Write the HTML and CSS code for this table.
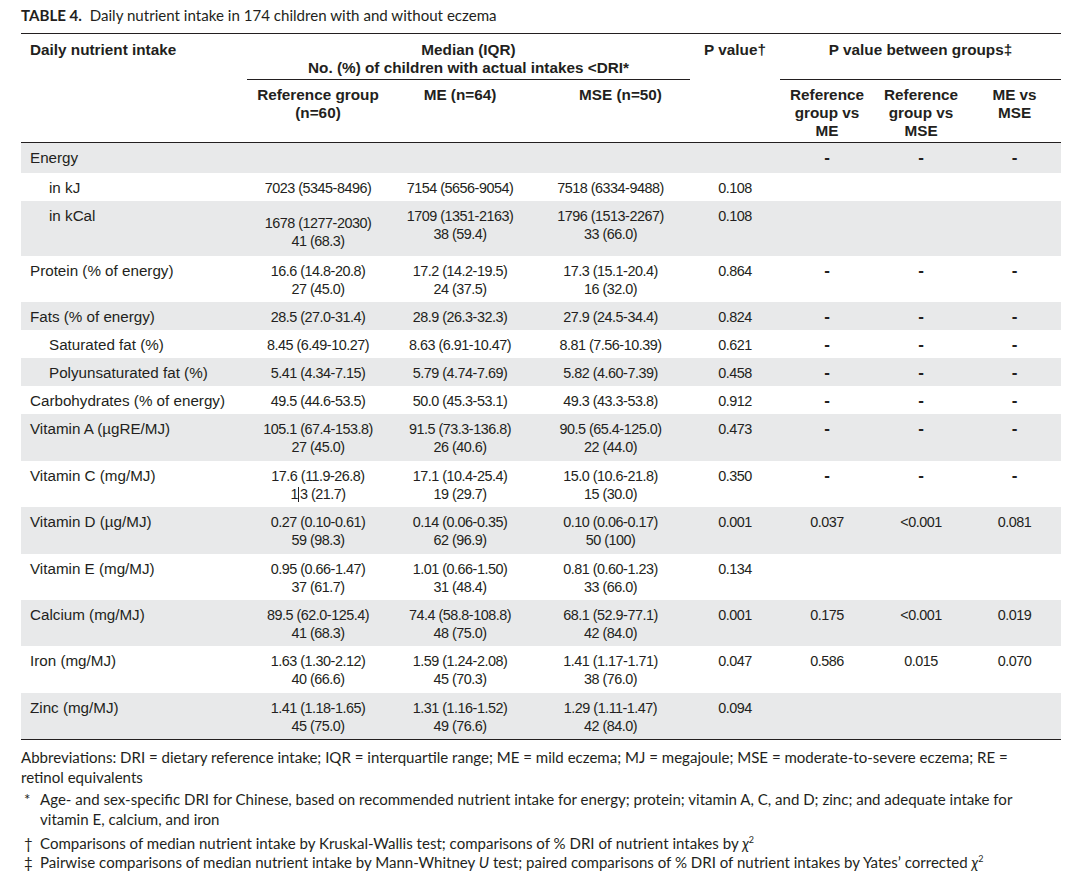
FILE: index.html
```html
<!DOCTYPE html>
<html lang="en">
<head>
<meta charset="utf-8">
<title>Table 4</title>
<link rel="stylesheet" href="styles.css">
</head>
<body>
<div class="page">
  <h1 class="title"><span class="tno">TABLE 4.</span>&nbsp; Daily nutrient intake in 174 children with and without eczema</h1>
  <table class="nt">
    <colgroup>
      <col class="c-lab"><col class="c-num"><col class="c-num"><col class="c-num3"><col class="c-p"><col class="c-g"><col class="c-g"><col class="c-g3">
    </colgroup>
    <thead>
      <tr class="h1">
        <th rowspan="2" class="lab">Daily nutrient intake</th>
        <th colspan="3" class="span">Median (IQR)<br>No. (%) of children with actual intakes &lt;DRI*</th>
        <th rowspan="2" class="pv">P value†</th>
        <th colspan="3" class="span">P value between groups‡</th>
      </tr>
      <tr class="h2">
        <th>Reference group<br>(n=60)</th>
        <th>ME (n=64)</th>
        <th class="mse">MSE (n=50)</th>
        <th>Reference<br>group vs<br>ME</th>
        <th>Reference<br>group vs<br>MSE</th>
        <th>ME vs<br>MSE</th>
      </tr>
    </thead>
    <tbody>
      <tr class="g e">
        <td class="lab">Energy</td><td></td><td></td><td></td><td></td><td class="ds">-</td><td class="ds">-</td><td class="ds">-</td>
      </tr>
      <tr>
        <td class="lab sub">in kJ</td><td>7023 (5345-8496)</td><td>7154 (5656-9054)</td><td>7518 (6334-9488)</td><td>0.108</td><td></td><td></td><td></td>
      </tr>
      <tr class="g kcal">
        <td class="lab sub">in kCal</td><td class="low">1678 (1277-2030)<br>41 (68.3)</td><td>1709 (1351-2163)<br>38 (59.4)</td><td>1796 (1513-2267)<br>33 (66.0)</td><td>0.108</td><td></td><td></td><td></td>
      </tr>
      <tr class="d">
        <td class="lab">Protein (% of energy)</td><td>16.6 (14.8-20.8)<br>27 (45.0)</td><td>17.2 (14.2-19.5)<br>24 (37.5)</td><td>17.3 (15.1-20.4)<br>16 (32.0)</td><td>0.864</td><td class="ds">-</td><td class="ds">-</td><td class="ds">-</td>
      </tr>
      <tr class="g">
        <td class="lab">Fats (% of energy)</td><td>28.5 (27.0-31.4)</td><td>28.9 (26.3-32.3)</td><td>27.9 (24.5-34.4)</td><td>0.824</td><td class="ds">-</td><td class="ds">-</td><td class="ds">-</td>
      </tr>
      <tr>
        <td class="lab sub">Saturated fat (%)</td><td>8.45 (6.49-10.27)</td><td>8.63 (6.91-10.47)</td><td>8.81 (7.56-10.39)</td><td>0.621</td><td class="ds">-</td><td class="ds">-</td><td class="ds">-</td>
      </tr>
      <tr class="g">
        <td class="lab sub">Polyunsaturated fat (%)</td><td>5.41 (4.34-7.15)</td><td>5.79 (4.74-7.69)</td><td>5.82 (4.60-7.39)</td><td>0.458</td><td class="ds">-</td><td class="ds">-</td><td class="ds">-</td>
      </tr>
      <tr>
        <td class="lab">Carbohydrates (% of energy)</td><td>49.5 (44.6-53.5)</td><td>50.0 (45.3-53.1)</td><td>49.3 (43.3-53.8)</td><td>0.912</td><td class="ds">-</td><td class="ds">-</td><td class="ds">-</td>
      </tr>
      <tr class="g d">
        <td class="lab">Vitamin A (µgRE/MJ)</td><td>105.1 (67.4-153.8)<br>27 (45.0)</td><td>91.5 (73.3-136.8)<br>26 (40.6)</td><td>90.5 (65.4-125.0)<br>22 (44.0)</td><td>0.473</td><td class="ds">-</td><td class="ds">-</td><td class="ds">-</td>
      </tr>
      <tr class="d">
        <td class="lab">Vitamin C (mg/MJ)</td><td>17.6 (11.9-26.8)<br>1<span class="caret"></span>3 (21.7)</td><td>17.1 (10.4-25.4)<br>19 (29.7)</td><td>15.0 (10.6-21.8)<br>15 (30.0)</td><td>0.350</td><td class="ds">-</td><td class="ds">-</td><td class="ds">-</td>
      </tr>
      <tr class="g d">
        <td class="lab">Vitamin D (µg/MJ)</td><td>0.27 (0.10-0.61)<br>59 (98.3)</td><td>0.14 (0.06-0.35)<br>62 (96.9)</td><td>0.10 (0.06-0.17)<br>50 (100)</td><td>0.001</td><td>0.037</td><td>&lt;0.001</td><td>0.081</td>
      </tr>
      <tr class="d">
        <td class="lab">Vitamin E (mg/MJ)</td><td>0.95 (0.66-1.47)<br>37 (61.7)</td><td>1.01 (0.66-1.50)<br>31 (48.4)</td><td>0.81 (0.60-1.23)<br>33 (66.0)</td><td>0.134</td><td></td><td></td><td></td>
      </tr>
      <tr class="g d">
        <td class="lab">Calcium (mg/MJ)</td><td>89.5 (62.0-125.4)<br>41 (68.3)</td><td>74.4 (58.8-108.8)<br>48 (75.0)</td><td>68.1 (52.9-77.1)<br>42 (84.0)</td><td>0.001</td><td>0.175</td><td>&lt;0.001</td><td>0.019</td>
      </tr>
      <tr class="d">
        <td class="lab">Iron (mg/MJ)</td><td>1.63 (1.30-2.12)<br>40 (66.6)</td><td>1.59 (1.24-2.08)<br>45 (70.3)</td><td>1.41 (1.17-1.71)<br>38 (76.0)</td><td>0.047</td><td>0.586</td><td>0.015</td><td>0.070</td>
      </tr>
      <tr class="g d">
        <td class="lab">Zinc (mg/MJ)</td><td>1.41 (1.18-1.65)<br>45 (75.0)</td><td>1.31 (1.16-1.52)<br>49 (76.6)</td><td>1.29 (1.11-1.47)<br>42 (84.0)</td><td>0.094</td><td></td><td></td><td></td>
      </tr>
    </tbody>
  </table>
  <div class="notes">
    <p class="abbr">Abbreviations: DRI = dietary reference intake; IQR = interquartile range; ME = mild eczema; MJ = megajoule; MSE = moderate-to-severe eczema; RE =<br>retinol equivalents</p>
    <p class="fn star"><span class="mk">*</span><span class="tx">Age- and sex-specific DRI for Chinese, based on recommended nutrient intake for energy; protein; vitamin A, C, and D; zinc; and adequate intake for<br>vitamin E, calcium, and iron</span></p>
    <p class="fn dag"><span class="mk">†</span><span class="tx">Comparisons of median nutrient intake by Kruskal-Wallis test; comparisons of % DRI of nutrient intakes by <i>χ</i><sup>2</sup></span></p>
    <p class="fn ddag"><span class="mk">‡</span><span class="tx">Pairwise comparisons of median nutrient intake by Mann-Whitney <i>U</i> test; paired comparisons of % DRI of nutrient intakes by Yates’ corrected <i>χ</i><sup>2</sup></span></p>
  </div>
</div>
</body>
</html>
```

FILE: styles.css
```css
html, body {
  margin: 0;
  padding: 0;
  background: #ffffff;
}

body {
  color: #231f20;
}

.page {
  width: 1040px;
  padding: 6px 0 0 21px;
}

.title {
  margin: 0;
  height: 27px;
  font-family: "Lato", "Liberation Sans", sans-serif;
  font-weight: 400;
  font-size: 15.1px;
  line-height: 18px;
  color: #231f20;
  white-space: nowrap;
}

.title .tno {
  font-weight: 700;
}

.nt {
  width: 1040px;
  border-collapse: collapse;
  table-layout: fixed;
  font-family: "Liberation Sans", Arial, sans-serif;
  color: #231f20;
  border-top: 1.5px solid #231f20;
  border-bottom: 1.5px solid #231f20;
}

.c-lab { width: 226px; }
.c-num { width: 142px; }
.c-num3 { width: 159px; }
.c-p { width: 90px; }
.c-g { width: 94px; }
.c-g3 { width: 93px; }

.nt th {
  font-weight: 700;
  font-size: 15.3px;
  line-height: 17.5px;
  text-align: center;
  vertical-align: top;
  padding: 0;
}

.nt .h1 th {
  padding-top: 7px;
  padding-bottom: 3px;
}

.nt .h1 th.span {
  border-bottom: 1px solid #231f20;
}

.nt .h2 th {
  padding-top: 6px;
  padding-bottom: 2px;
  line-height: 18px;
}

.nt .h2 th.mse {
  padding-left: 20px;
}

.nt thead {
  border-bottom: 1px solid #231f20;
}

.nt th.lab {
  text-align: left;
  padding-left: 9px;
}

.nt td {
  font-size: 14.4px;
  letter-spacing: -0.5px;
  line-height: 18px;
  text-align: center;
  vertical-align: top;
  padding: 6px 0 4px 0;
  white-space: nowrap;
}

.nt td.ds {
  font-size: 17px;
  font-weight: 700;
  letter-spacing: 0;
}

.nt tr.e td {
  padding-bottom: 6px;
}

.nt tr.d td {
  padding-bottom: 4.375px;
}

.nt td.lab {
  text-align: left;
  font-size: 15.2px;
  letter-spacing: 0;
  padding-left: 9px;
}

.nt td.sub {
  padding-left: 28px;
}

.nt tr.g td {
  background: #e8e9ea;
}

.nt tr.kcal td {
  padding-bottom: 13px;
}

.nt tr.kcal td.low {
  padding-top: 13px;
  padding-bottom: 6px;
}

.caret {
  display: inline-block;
  width: 0;
  height: 15px;
  border-left: 1px solid #231f20;
  vertical-align: -3px;
  margin: 0 0.5px;
}

.notes {
  padding-top: 7px;
  font-family: "Lato", "Liberation Sans", sans-serif;
  font-size: 15.05px;
  line-height: 20px;
  color: #231f20;
}

.notes p {
  margin: 0;
}

.notes .fn {
  display: flex;
}

.notes .fn.star {
  margin-top: 2px;
}

.notes .fn.dag {
  margin-top: 4px;
}

.notes .fn.ddag {
  margin-top: -1px;
}

.notes .mk {
  width: 19px;
  flex: none;
  padding-left: 3px;
  box-sizing: border-box;
}

.notes .tx {
  flex: 1;
}

.notes sup {
  font-size: 9px;
  line-height: 0;
  vertical-align: 6px;
}
```
